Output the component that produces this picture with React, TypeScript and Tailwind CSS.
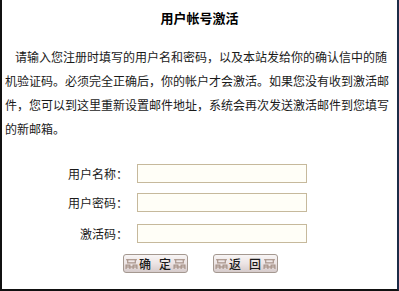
import React from "react";

function BtnIcon() {
  return (
    <svg width="13" height="13" viewBox="0 0 12 12" className="shrink-0">
      <g fill="none" stroke="#a8948a" strokeWidth="1.1">
        <path d="M1 2.5h10" />
        <path d="M2.5 2.5v3h7v-3" />
        <path d="M1 11V7.5h3.5V11" />
        <path d="M7.5 11V7.5H11V11" />
        <path d="M1 9.2h10" />
      </g>
    </svg>
  );
}

function Btn({ a, b }: { a: string; b: string }) {
  return (
    <button
      type="button"
      className="w-[65px] h-[19px] rounded-[3px] border border-[#a49890] bg-gradient-to-b from-[#f8f5f5] via-[#ece4e4] to-[#d6cbcb] flex items-center justify-between px-[1px] text-[12px] leading-none text-[#1a1a1a] font-medium"
    >
      <BtnIcon />
      <span className="flex gap-[8px]">
        <span>{a}</span>
        <span>{b}</span>
      </span>
      <BtnIcon />
    </button>
  );
}

function Row({ label, mt }: { label: string; mt: string }) {
  return (
    <div className={`flex items-center ${mt}`}>
      <div className="w-[126px] text-right text-[12px] leading-[19px] text-[#1a1a1a]">{label}</div>
      <div className="w-[9px]" />
      <input className="w-[170px] h-[19px] border border-[#c6b99c] bg-[#fffef7] outline-none" />
    </div>
  );
}

export default function App() {
  return (
    <div className="w-[399px] h-[291px] box-border bg-white border-l-2 border-r-2 border-b-2 border-l-[#111] border-r-[#1c2c48] border-b-[#111] font-['Noto_Sans_CJK_SC','Liberation_Sans',sans-serif] text-[#1a1a1a]">
      <div className="h-[36px] flex items-center justify-center text-[13px] font-bold text-black">
        用户帐号激活
      </div>
      <p className="mt-[9px] pl-[3px] w-[387px] text-[12px] leading-[24px] indent-[10px]">
        请输入您注册时填写的用户名和密码，以及本站发给你的确认信中的随机验证码。必须完全正确后，你的帐户才会激活。如果您没有收到激活邮件，您可以到这里重新设置邮件地址，系统会再次发送激活邮件到您填写的新邮箱。
      </p>
      <div className="mt-[23px]">
        <Row label="用户名称：" mt="mt-0" />
        <Row label="用户密码：" mt="mt-[10px]" />
        <Row label="激活码：" mt="mt-[12px]" />
      </div>
      <div className="mt-[11px] flex justify-center gap-[25px] pl-[1px]">
        <Btn a="确" b="定" />
        <Btn a="返" b="回" />
      </div>
    </div>
  );
}
